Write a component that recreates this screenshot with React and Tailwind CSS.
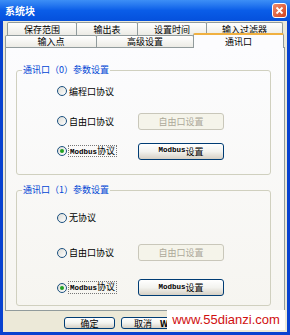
import React from 'react';

const cjk = { fontFamily: '"Noto Sans CJK SC", sans-serif' };

const Tab = ({ label, width }) => (
  <div
    className={`${width} h-full flex items-center justify-center border border-b-0 border-[#919b9c] rounded-t-[2px] bg-gradient-to-b from-white to-[#ecebe5] text-[9px] leading-none text-black -mr-px`}
  >
    {label}
  </div>
);

const Radio = ({ checked }) => (
  <span className="w-[10px] h-[10px] rounded-full border border-[#1c5180] bg-gradient-to-br from-[#dcdcd6] to-white flex items-center justify-center shrink-0">
    {checked && <span className="w-[4px] h-[4px] rounded-full bg-[#21a121]" />}
  </span>
);

const XpButton = ({ children, disabled, className = '' }) => (
  <div
    className={`flex items-center justify-center rounded-[3px] border text-[9px] leading-none ${
      disabled
        ? 'border-[#c9c7ba] bg-[#f5f4ea] text-[#aca899]'
        : 'border-[#003c74] bg-gradient-to-b from-white via-[#f3f3ef] to-[#d6d0c5] text-black'
    } ${className}`}
  >
    {children}
  </div>
);

const Modbus = () => (
  <span className="font-bold text-[7.5px]" style={{ fontFamily: '"Liberation Mono", monospace' }}>
    Modbus
  </span>
);

const Row = ({ checked, label, button, disabled, height }) => (
  <div className={`${height} grid grid-cols-[81px_86px] items-center`}>
    <div className="flex items-center gap-[2px] text-[9px] leading-none text-black">
      <Radio checked={checked} />
      <span className={checked ? 'outline outline-1 outline-dotted outline-[#777] px-px' : ''}>{label}</span>
    </div>
    {button && (
      <XpButton disabled={disabled} className="h-[17px]">
        {button}
      </XpButton>
    )}
  </div>
);

const Group = ({ title, children, className = '' }) => (
  <fieldset className={`ml-[10px] w-[255px] min-w-0 border border-[#d0d0bf] rounded-[3px] ${className}`}>
    <legend className="ml-[5px] px-px text-[9px] leading-[10px] text-[#0046d5]">{title}</legend>
    {children}
  </fieldset>
);

export default function App() {
  return (
    <div className="w-[290px] h-[335px] flex flex-col bg-[#0842d0] relative overflow-hidden" style={cjk}>
      {/* Title bar */}
      <div className="h-[21px] shrink-0 flex items-center justify-between pl-[5px] pr-[3px] bg-gradient-to-b from-[#3d8ff6] via-[#0a5de8] to-[#0550dc]">
        <span className="text-white font-bold text-[10px] leading-none">系统块</span>
        <div className="w-[15px] h-[15px] rounded-[3px] border border-white bg-gradient-to-br from-[#f08a6a] to-[#d0401a] flex items-center justify-center">
          <svg width="9" height="9" viewBox="0 0 9 9">
            <path d="M1.5 1.5 L7.5 7.5 M7.5 1.5 L1.5 7.5" stroke="white" strokeWidth="1.8" />
          </svg>
        </div>
      </div>

      {/* Body */}
      <div className="flex-1 mx-[3px] mb-[3px] bg-[#ece9d8] flex flex-col">
        {/* Tabs row 1 */}
        <div className="h-[13px] mt-[1px] ml-[4px] flex">
          <Tab label="保存范围" width="w-[70px]" />
          <Tab label="输出表" width="w-[62px]" />
          <Tab label="设置时间" width="w-[70px]" />
          <Tab label="输入过滤器" width="w-[77px]" />
        </div>
        {/* Tabs row 2 */}
        <div className="h-[12px] ml-[2px] flex items-end relative z-10">
          <Tab label="输入点" width="w-[92px]" />
          <Tab label="高级设置" width="w-[98px]" />
          <div className="w-[91px] h-[15px] -mb-px flex items-center justify-center border border-b-0 border-[#919b9c] border-t-2 border-t-[#f0b040] rounded-t-[2px] bg-[#fcfcfe] text-[9px] leading-none text-black">
            通讯口
          </div>
        </div>

        {/* Panel */}
        <div className="h-[264px] ml-[2px] w-[280px] border border-[#919b9c] bg-gradient-to-b from-[#fcfcfe] to-[#f6f5f0] flex flex-col">
          <Group title="通讯口（0）参数设置" className="mt-[17px] pb-[8px]">
            <div className="pt-[1px] pl-[40px]">
              <Row label="编程口协议" height="h-[30px]" />
              <Row label="自由口协议" height="h-[30px]" button="自由口设置" disabled />
              <Row
                checked
                label={<><Modbus />协议</>}
                height="h-[30px]"
                button={<><Modbus />设置</>}
              />
            </div>
          </Group>
          <Group title="通讯口（1）参数设置" className="mt-[10px]">
            <div className="pt-[5px] pl-[40px]">
              <Row label="无协议" height="h-[35px]" />
              <Row label="自由口协议" height="h-[35px]" button="自由口设置" disabled />
              <Row
                checked
                label={<><Modbus />协议</>}
                height="h-[35px]"
                button={<><Modbus />设置</>}
              />
            </div>
          </Group>
        </div>

        {/* Bottom buttons */}
        <div className="flex gap-[6px] ml-[61px] mt-[6px]">
          <XpButton className="w-[51px] h-[12px]">确定</XpButton>
          <XpButton className="w-[60px] h-[12px] justify-start pl-[12px] gap-[8px]">
            取消 <span className="font-bold">W</span>
          </XpButton>
        </div>
      </div>

      {/* Watermark overlay */}
      <div
        className="absolute left-[167px] top-[310px] w-[118px] h-[20px] bg-white flex items-center justify-center text-[13px] text-[#d01010]"
        style={{ fontFamily: '"Liberation Sans", Arial, sans-serif' }}
      >
        www.55dianzi.com
      </div>
    </div>
  );
}
